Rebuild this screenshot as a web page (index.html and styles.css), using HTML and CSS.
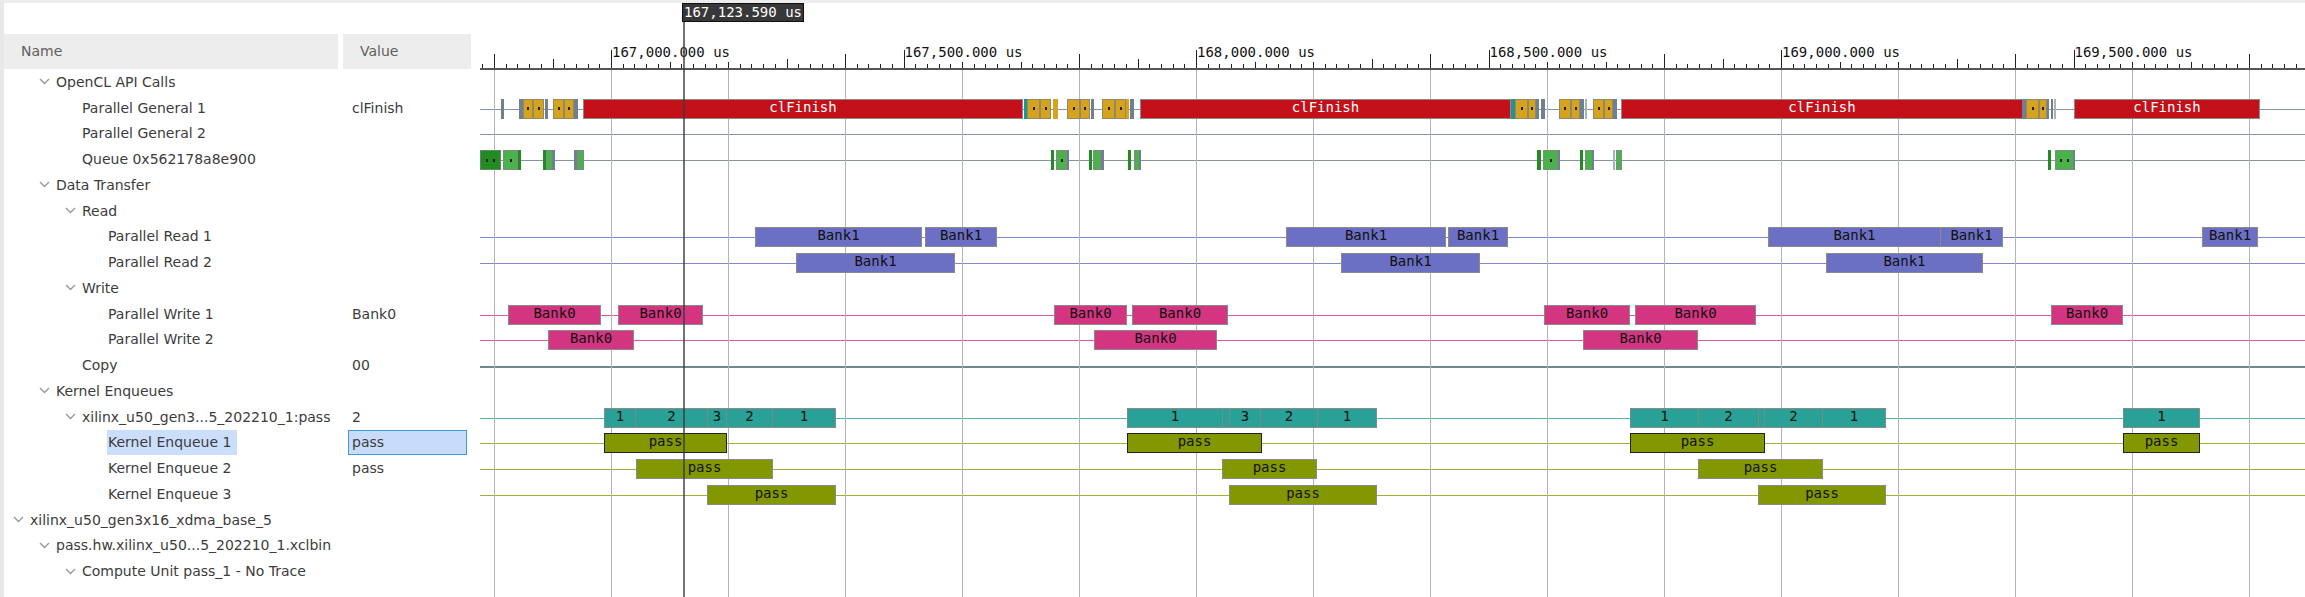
FILE: index.html
```html
<!DOCTYPE html>
<html lang="en">
<head>
<meta charset="utf-8">
<title>Timeline Trace</title>
<link rel="stylesheet" href="styles.css">
</head>
<body>
<main class="viewer">
  <table class="tree">
    <thead>
      <tr><th scope="col">Name</th><th scope="col">Value</th></tr>
    </thead>
    <tbody id="tree-rows"></tbody>
  </table>
  <section class="timeline" aria-label="Timeline">
    <div class="ruler" id="ruler"></div>
    <div class="tracks" id="tracks"></div>
    <div class="grid" id="grid"></div>
    <div class="cursor" id="cursor"><span class="cursor-label">167,123.590 us</span></div>
  </section>
</main>
<script src="app.js"></script>
</body>
</html>
```

FILE: styles.css
```css
* { box-sizing: border-box; }

body {
  margin: 0;
  background: #fff;
  color: #3c3c3c;
  font: 14px/20px "DejaVu Sans", sans-serif;
}

.viewer {
  display: grid;
  grid-template-columns: 467px 1fr;
  column-gap: 9px;
  min-height: 100vh;
  border-top: 3px solid #ededed;
  border-left: 4px solid #e8e8e8;
  overflow: hidden;
}

/* Signal tree */
.tree {
  display: flex;
  flex-direction: column;
  padding: 31px 0 13px;
}

.tree tr {
  display: grid;
  grid-template-columns: 334px 128px;
  column-gap: 5px;
}

.tree th {
  height: 35px;
  padding: 0 17px;
  background: #ededed;
  color: #5f5f5f;
  font-weight: normal;
  line-height: 35px;
  text-align: left;
}

.tree tbody {
  display: grid;
  flex: 1;
  grid-template-rows: repeat(20, minmax(20px, 1fr));
}

.tree td {
  display: flex;
  align-items: center;
  padding: 0;
  white-space: nowrap;
}

.tree .level-0 { padding-left: 9px; }
.tree .level-1 { padding-left: 35px; }
.tree .level-2 { padding-left: 61px; }
.tree .level-3 { padding-left: 87px; }

.toggle {
  display: flex;
  flex: none;
  align-items: center;
  width: 17px;
  height: 16px;
  padding: 0;
  border: 0;
  background: none;
}

.toggle svg {
  width: 11px;
  height: 7px;
  fill: none;
  stroke: #999;
  stroke-width: 1.4;
}

.name {
  display: flex;
  align-items: center;
  align-self: stretch;
}

.leaf {
  margin-left: 16px;
  padding: 0 6px 0 1px;
}

.value {
  display: flex;
  flex: 1;
  align-items: center;
  align-self: stretch;
  margin: 0 4px 0 5px;
  padding: 0 3px;
  border: 1px solid transparent;
}

.selected .name {
  background: #cbdefc;
}

.selected .value {
  border-color: #3d9bd9;
  background: #c9dbfa;
}

/* Timeline */
.timeline {
  position: relative;
  display: flex;
  flex-direction: column;
  min-width: 0;
  color: #111;
  font-family: "DejaVu Sans Mono", monospace;
}

.ruler {
  position: relative;
  height: 67px;
  border-bottom: 2px solid #555;
}

.tick {
  position: absolute;
  bottom: 0;
  width: 1px;
  height: 4px;
  background: #222;
}

.tick-small { height: 6px; }
.tick-mid { height: 9px; }
.tick-tall { height: 14px; }
.tick-label { height: 18px; }

.time {
  position: absolute;
  bottom: 6px;
  padding-left: 1px;
  white-space: nowrap;
}

.tracks {
  display: grid;
  flex: 1;
  grid-template-rows: repeat(20, minmax(20px, 1fr));
  padding-bottom: 12px;
}

.track { position: relative; }

.track::before {
  content: "";
  position: absolute;
  top: 50%;
  left: 0;
  right: 0;
  border-top: 1px solid var(--line);
}

.empty::before { display: none; }
.copy::before { border-width: 2px; }
.api { --line: #8496a5; }
.read { --line: #8088cf; }
.write { --line: #dc5b99; }
.copy { --line: #6f8791; }
.count { --line: #54b5ab; }
.kernel { --line: #9bb236; }

.bar {
  position: absolute;
  z-index: 1;
  top: 50%;
  display: flex;
  justify-content: center;
  height: 20px;
  margin-top: -10px;
  border: 1px solid #8a8a8a;
  line-height: 14px;
  white-space: nowrap;
}

.finish { background: #c41018; color: #fff; }
.bank-read { background: #6b70c4; }
.bank-write { background: #d43580; }
.total { background: #29a196; }
.total + .total { border-left-color: #708f8b; }
.pass { background: #839700; }
.chosen { border-color: #222; }
.gold { background: #d8a31c; border-color: #8e8a6a; }
.green { background: #4bb24b; border-color: #7d8c84; }
.forest { background: #228b22; border-color: #5d8a62; }
.slate { background: #708090; border: 0; }
.pale { background: #a9b3bc; border: 0; }
.amber { background: #d8a31c; border: 0; }
.teal { background: #1f9590; border: 0; }
.dark { background: #228b22; border: 0; }

.dots { justify-content: space-evenly; align-items: center; }

.dot {
  width: 2px;
  height: 3px;
  background: #222;
}

.grid {
  position: absolute;
  top: 67px;
  bottom: 0;
  left: 0;
  right: 0;
}

.gridline {
  position: absolute;
  top: 0;
  bottom: 0;
  width: 1px;
  background: #b4b4b4;
}

.cursor {
  position: absolute;
  z-index: 2;
  top: 0;
  bottom: 0;
  border-left: 2px solid rgba(60, 60, 60, .72);
}

.cursor-label {
  position: absolute;
  top: 0;
  left: -3px;
  height: 19px;
  padding: 0 1px;
  border: 1px solid #111;
  background: #383838;
  color: #fff;
  line-height: 16px;
  white-space: nowrap;
}
```

FILE: app.js
```js
// Positions are in units of the visible span, which is 1825 units wide.
const SPAN = 1825;
const pct = (n) => (n / SPAN) * 100 + '%';

// depth, expandable, name, value, track style
const rows = [
  [1, 1, 'OpenCL API Calls', '', ''],
  [2, 0, 'Parallel General 1', 'clFinish', 'api'],
  [2, 0, 'Parallel General 2', '', 'api'],
  [2, 0, 'Queue 0x562178a8e900', '', 'api'],
  [1, 1, 'Data Transfer', '', ''],
  [2, 1, 'Read', '', ''],
  [3, 0, 'Parallel Read 1', '', 'read'],
  [3, 0, 'Parallel Read 2', '', 'read'],
  [2, 1, 'Write', '', ''],
  [3, 0, 'Parallel Write 1', 'Bank0', 'write'],
  [3, 0, 'Parallel Write 2', '', 'write'],
  [2, 0, 'Copy', '00', 'copy'],
  [1, 1, 'Kernel Enqueues', '', ''],
  [2, 1, 'xilinx_u50_gen3...5_202210_1:pass', '2', 'count'],
  [3, 0, 'Kernel Enqueue 1', 'pass', 'kernel'],
  [3, 0, 'Kernel Enqueue 2', 'pass', 'kernel'],
  [3, 0, 'Kernel Enqueue 3', '', 'kernel'],
  [0, 1, 'xilinx_u50_gen3x16_xdma_base_5', '', ''],
  [1, 1, 'pass.hw.xilinx_u50...5_202210_1.xclbin', '', ''],
  [2, 1, 'Compute Unit pass_1 - No Trace', '', '']
];
const SELECTED = 14;

// start, end, style, label (a number asks for that many dots)
const R = 'bank-read', W = 'bank-write', T = 'total', P = 'pass', C = 'pass chosen';
const bars = {
  1: [
    [21, 24, 'slate'], [39, 43, 'slate'], [43, 53, 'gold', 1], [53, 64, 'gold', 1], [65, 68, 'slate'],
    [73, 84, 'gold', 1], [84, 94, 'gold', 1], [94, 98, 'slate'], [103, 543, 'finish', 'clFinish'],
    [544, 547, 'teal'], [547, 560, 'gold', 1], [560, 571, 'gold', 1], [573, 578, 'amber'],
    [587, 600, 'gold', 1], [600, 610, 'gold', 1], [611, 614, 'slate'],
    [622, 635, 'gold', 1], [635, 646, 'gold', 1], [646, 649, 'amber'], [650, 654, 'slate'],
    [660, 1031, 'finish', 'clFinish'], [1031, 1035, 'teal'], [1035, 1048, 'gold', 1],
    [1048, 1056, 'gold', 1], [1056, 1059, 'slate'], [1061, 1065, 'slate'],
    [1079, 1091, 'gold', 1], [1091, 1100, 'gold', 1], [1100, 1104, 'slate'], [1105, 1107, 'pale'],
    [1113, 1124, 'gold', 1], [1124, 1133, 'gold', 1], [1133, 1137, 'slate'],
    [1141, 1543, 'finish', 'clFinish'], [1542, 1546, 'slate'], [1546, 1559, 'gold', 1],
    [1559, 1567, 'gold', 1], [1567, 1569, 'slate'], [1571, 1573, 'slate'], [1574, 1576, 'pale'],
    [1594, 1780, 'finish', 'clFinish']
  ],
  3: [
    [0, 21, 'forest', 2], [23, 38, 'green', 1], [38, 41, 'dark'], [63, 66, 'dark'], [66, 73, 'green'],
    [72, 75, 'slate'], [94, 97, 'slate'], [97, 104, 'green'],
    [571, 574, 'dark'], [576, 587, 'green', 1], [587, 589, 'slate'], [609, 612, 'dark'],
    [613, 621, 'green'], [621, 624, 'slate'], [648, 651, 'dark'], [654, 660, 'green'], [659, 661, 'slate'],
    [1057, 1061, 'dark'], [1063, 1078, 'green', 1], [1078, 1080, 'slate'], [1100, 1103, 'dark'],
    [1105, 1113, 'green'], [1112, 1114, 'slate'], [1133, 1135, 'pale'], [1136, 1142, 'green'],
    [1568, 1571, 'dark'], [1575, 1594, 'green', 2], [1593, 1595, 'slate']
  ],
  6: [
    [275, 442, R, 'Bank1'], [445, 517, R, 'Bank1'], [806, 966, R, 'Bank1'], [968, 1028, R, 'Bank1'],
    [1288, 1461, R, 'Bank1'], [1460, 1523, R, 'Bank1'], [1722, 1778, R, 'Bank1']
  ],
  7: [[316, 475, R, 'Bank1'], [861, 1000, R, 'Bank1'], [1346, 1503, R, 'Bank1']],
  9: [
    [28, 121, W, 'Bank0'], [138, 223, W, 'Bank0'], [574, 647, W, 'Bank0'], [652, 748, W, 'Bank0'],
    [1064, 1150, W, 'Bank0'], [1155, 1276, W, 'Bank0'], [1571, 1643, W, 'Bank0']
  ],
  10: [[68, 154, W, 'Bank0'], [614, 737, W, 'Bank0'], [1103, 1218, W, 'Bank0']],
  13: [
    [124, 156, T, '1'], [155, 228, T, '2'], [227, 247, T, '3'], [246, 293, T, '2'], [292, 356, T, '1'],
    [647, 743, T, '1'], [742, 750, T], [749, 781, T, '3'], [780, 838, T, '2'], [837, 897, T, '1'],
    [1150, 1219, T, '1'], [1218, 1279, T, '2'], [1278, 1285, T], [1284, 1343, T, '2'], [1342, 1406, T, '1'],
    [1643, 1720, T, '1']
  ],
  14: [[124, 247, C, 'pass'], [647, 782, C, 'pass'], [1150, 1285, C, 'pass'], [1643, 1720, C, 'pass']],
  15: [[156, 293, P, 'pass'], [742, 837, P, 'pass'], [1218, 1343, P, 'pass']],
  16: [[227, 356, P, 'pass'], [749, 897, P, 'pass'], [1278, 1406, P, 'pass']]
};

const toggle = '<button class="toggle" type="button" aria-label="Collapse">' +
  '<svg viewBox="0 0 11 7"><path d="M1 1l4.5 4.5L10 1"/></svg></button>';

document.getElementById('tree-rows').innerHTML = rows.map(([depth, open, name, value], i) =>
  `<tr class="${i === SELECTED ? 'selected' : ''}">` +
  `<td class="level-${depth}">${open ? toggle : ''}<span class="name${open ? '' : ' leaf'}">${name}</span></td>` +
  `<td><span class="value">${value}</span></td></tr>`
).join('');

const bar = ([start, end, style, label]) => {
  const dots = typeof label === 'number';
  const content = dots ? '<i class="dot"></i>'.repeat(label) : label || '';
  return `<div class="bar ${style}${dots ? ' dots' : ''}" ` +
    `style="left:${pct(start)};width:${pct(end - start)}">${content}</div>`;
};

document.getElementById('tracks').innerHTML = rows.map((row, i) =>
  `<div class="track ${row[4] || 'empty'}">${(bars[i] || []).map(bar).join('')}</div>`
).join('');

// Ruler: one minor tick every 20 us, a major step every 100 us, a label every 500 us.
// Even major steps carry a grid line.
const ORIGIN = 131, MINOR = 11.7;
let ruler = '', grid = '';
for (let i = -11; ORIGIN + i * MINOR < SPAN; i++) {
  const left = pct(ORIGIN + i * MINOR);
  let size = '';
  if (i % 5 === 0) {
    const step = i / 5;
    const phase = ((step % 5) + 5) % 5;
    const even = step % 2 === 0;
    size = phase === 0 ? 'tick-label' : phase < 3 ? 'tick-small' : even ? 'tick-tall' : 'tick-mid';
    if (even) grid += `<i class="gridline" style="left:${left}"></i>`;
    if (phase === 0) {
      const time = (167000 + step * 100).toLocaleString('en-US');
      ruler += `<span class="time" style="left:${left}">${time}.000 us</span>`;
    }
  }
  ruler += `<i class="tick ${size}" style="left:${left}"></i>`;
}
document.getElementById('ruler').innerHTML = ruler;
document.getElementById('grid').innerHTML = grid;
document.getElementById('cursor').style.left = pct(203);
```
